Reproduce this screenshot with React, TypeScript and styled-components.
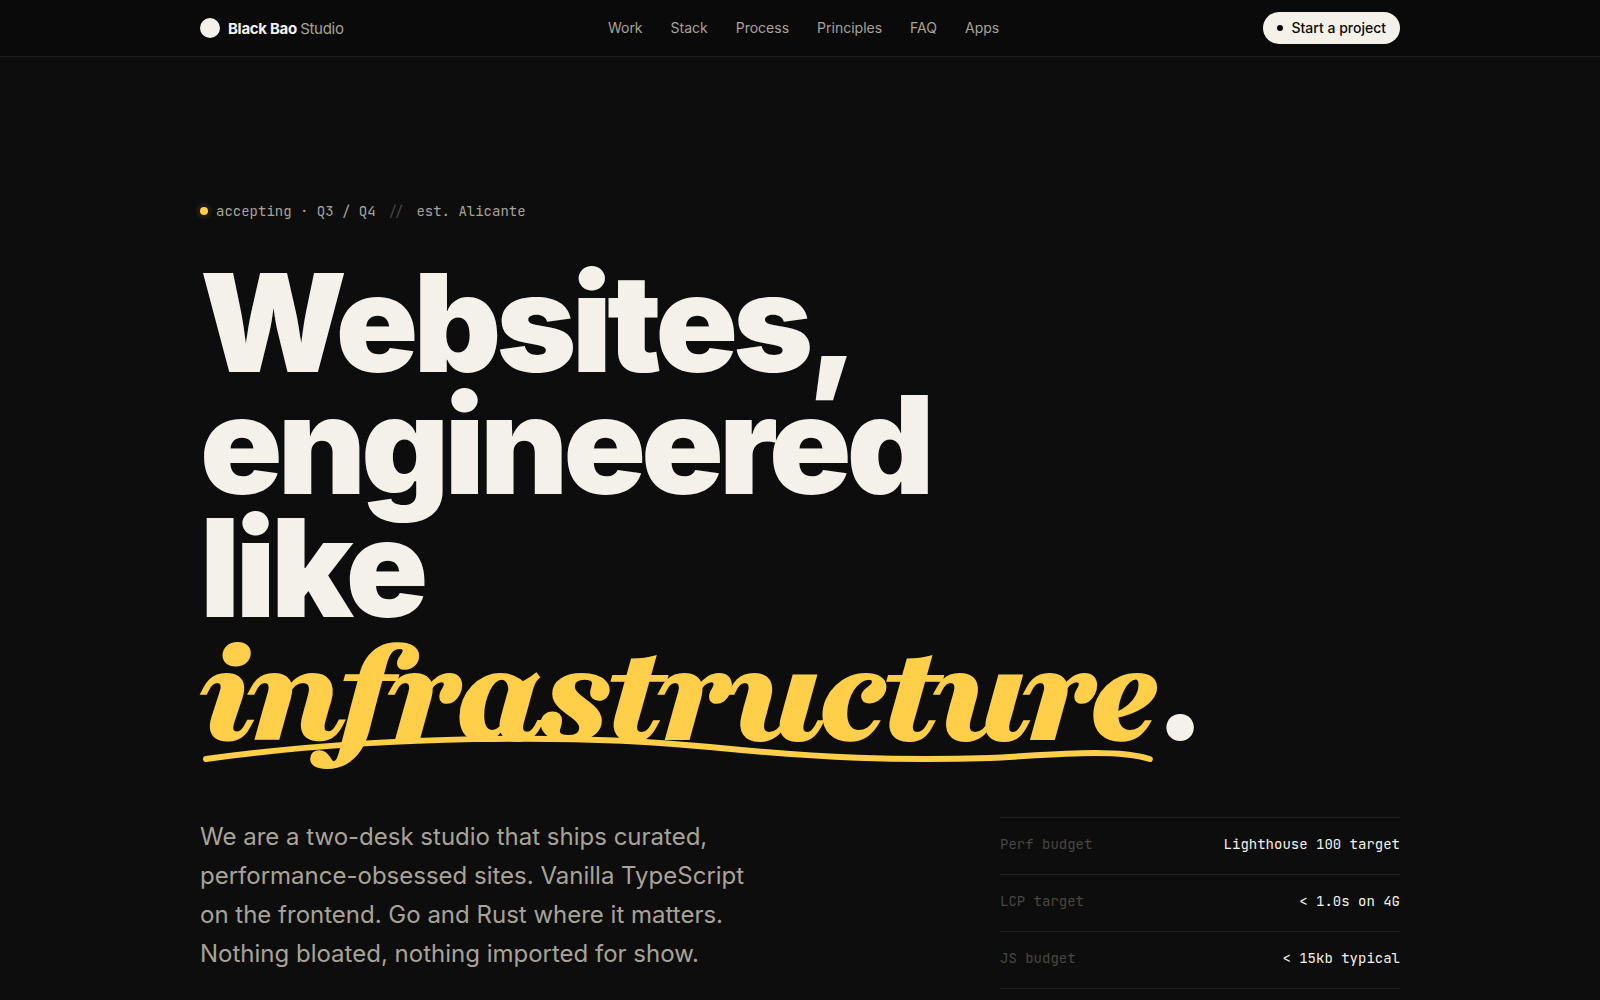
import React from "react";
import styled, { createGlobalStyle } from "styled-components";

const color = {
  bg: "#0d0d0d",
  bar: "#0a0a0a",
  line: "#232120",
  paper: "#f4f1ea",
  muted: "#a8a399",
  dim: "#4a4742",
  accent: "#ffcf4a",
};

const sans = `Inter, "Liberation Sans", sans-serif`;
const mono = `"JetBrains Mono", "DejaVu Sans Mono", monospace`;
const serif = `Playfair, "Liberation Serif", serif`;

const GlobalStyle = createGlobalStyle`
  *, *::before, *::after { box-sizing: border-box; }
  body {
    margin: 0;
    background: ${color.bg};
    color: ${color.paper};
    font-family: ${sans};
    -webkit-font-smoothing: antialiased;
  }
`;

const Container = styled.div`
  width: 100%;
  max-width: 1248px;
  margin: 0 auto;
  padding: 0 24px;
`;

const Header = styled.header`
  background: ${color.bar};
  border-bottom: 1px solid ${color.line};
`;

const Bar = styled(Container)`
  display: flex;
  align-items: center;
  justify-content: space-between;
  height: 56px;
`;

const Brand = styled.a`
  display: flex;
  align-items: center;
  gap: 8px;
  color: ${color.paper};
  font-size: 15px;
  font-weight: 700;
  letter-spacing: -0.02em;
  text-decoration: none;
`;

const BrandMark = styled.span`
  width: 20px;
  height: 20px;
  border-radius: 50%;
  background: ${color.paper};
`;

const BrandSuffix = styled.span`
  color: ${color.muted};
  font-weight: 400;
`;

const Nav = styled.nav`
  display: flex;
  gap: 28px;
`;

const NavLink = styled.a`
  color: ${color.muted};
  font-size: 14px;
  line-height: 20px;
  text-decoration: none;
`;

const Cta = styled.button`
  display: flex;
  align-items: center;
  gap: 8px;
  height: 32px;
  padding: 0 14px;
  border: 0;
  border-radius: 16px;
  background: ${color.paper};
  color: ${color.bar};
  font-family: ${sans};
  font-size: 14px;
  font-weight: 500;
  line-height: 20px;
`;

const Dot = styled.span<{ $size: number; $halo?: boolean }>`
  width: ${(p) => p.$size}px;
  height: ${(p) => p.$size}px;
  border-radius: 50%;
  background: ${(p) => (p.$halo ? color.accent : color.bar)};
  box-shadow: ${(p) => (p.$halo ? "0 0 0 4px rgba(255, 207, 74, 0.06)" : "none")};
`;

const Hero = styled.main`
  padding: 143px 0 0;
`;

const Eyebrow = styled.div`
  display: flex;
  align-items: center;
  gap: 8px;
  margin-bottom: 40px;
  color: ${color.muted};
  font-family: ${mono};
  font-size: 14px;
  line-height: 22px;
`;

const EyebrowText = styled.span`
  display: flex;
  gap: 12px;
`;

const Slashes = styled.span`
  color: ${color.dim};
`;

const Title = styled.h1`
  margin: 0 0 65px;
  font-size: 136px;
  font-weight: 900;
  line-height: 0.9;
  letter-spacing: -0.035em;
`;

/* The thin stroke gives the hairlines of the display italic some body. */
const Accent = styled.em`
  position: relative;
  color: ${color.accent};
  font-family: ${serif};
  font-size: 150px;
  font-weight: 900;
  font-style: italic;
  line-height: 0;
  -webkit-text-stroke: 2px ${color.accent};
`;

const Underline = styled.svg`
  position: absolute;
  left: 0;
  bottom: 22px;
  width: 100%;
  height: 30px;
  overflow: visible;
`;

const FullStop = styled.span`
  margin-left: -2px;
`;

const Details = styled.div`
  display: grid;
  grid-template-columns: minmax(0, 1fr) 400px;
  gap: 64px;
  align-items: start;
`;

const Lead = styled.p`
  max-width: 560px;
  margin: 0;
  color: ${color.muted};
  font-size: 24px;
  line-height: 39px;
`;

const Specs = styled.dl`
  margin: 0;
  border-bottom: 1px solid ${color.line};
  font-family: ${mono};
  font-size: 14px;
  line-height: 24px;
`;

const Spec = styled.div`
  display: flex;
  justify-content: space-between;
  padding: 14px 0 18px;
  border-top: 1px solid ${color.line};
`;

const SpecName = styled.dt`
  color: ${color.dim};
`;

const SpecValue = styled.dd`
  margin: 0;
`;

const links = ["Work", "Stack", "Process", "Principles", "FAQ", "Apps"];

const specs = [
  { name: "Perf budget", value: "Lighthouse 100 target" },
  { name: "LCP target", value: "< 1.0s on 4G" },
  { name: "JS budget", value: "< 15kb typical" },
];

export default function App() {
  return (
    <>
      <GlobalStyle />
      <Header>
        <Bar>
          <Brand href="#top">
            <BrandMark />
            <span>
              Black Bao <BrandSuffix>Studio</BrandSuffix>
            </span>
          </Brand>
          <Nav>
            {links.map((label) => (
              <NavLink key={label} href={`#${label.toLowerCase()}`}>
                {label}
              </NavLink>
            ))}
          </Nav>
          <Cta type="button">
            <Dot $size={6} />
            Start a project
          </Cta>
        </Bar>
      </Header>
      <Hero id="top">
        <Container>
          <Eyebrow>
            <Dot $size={8} $halo />
            <EyebrowText>
              <span>accepting · Q3 / Q4</span>
              <Slashes>//</Slashes>
              <span>est. Alicante</span>
            </EyebrowText>
          </Eyebrow>
          <Title>
            Websites,
            <br />
            engineered
            <br />
            like
            <br />
            <Accent>
              infrastructure
              <Underline viewBox="0 0 957 30" preserveAspectRatio="none" aria-hidden="true">
                <path
                  d="M6 25 C180 1 380 0 510 13 C620 24 700 27 790 24 C850 21 915 14 950 25"
                  fill="none"
                  stroke={color.accent}
                  strokeWidth="6"
                  strokeLinecap="round"
                />
              </Underline>
            </Accent>
            <FullStop>.</FullStop>
          </Title>
          <Details>
            <Lead>
              We are a two-desk studio that ships curated, performance-obsessed sites. Vanilla
              TypeScript on the frontend. Go and Rust where it matters. Nothing bloated, nothing
              imported for show.
            </Lead>
            <Specs>
              {specs.map((spec) => (
                <Spec key={spec.name}>
                  <SpecName>{spec.name}</SpecName>
                  <SpecValue>{spec.value}</SpecValue>
                </Spec>
              ))}
            </Specs>
          </Details>
        </Container>
      </Hero>
    </>
  );
}
